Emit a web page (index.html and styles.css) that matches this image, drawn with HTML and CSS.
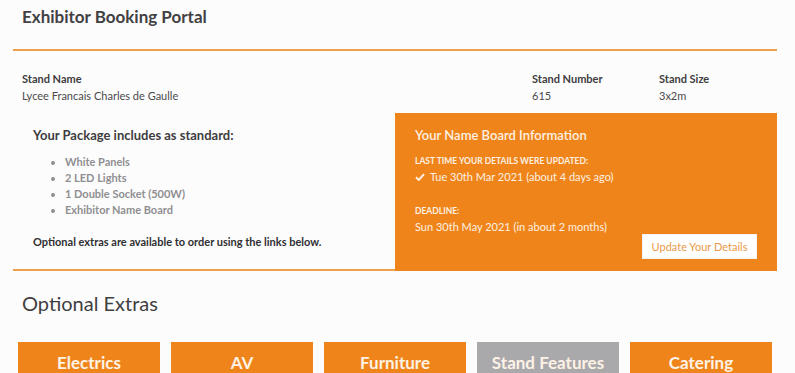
FILE: index.html
```html
<!DOCTYPE html>
<html lang="en">
<head>
  <meta charset="UTF-8">
  <meta name="viewport" content="width=device-width, initial-scale=1.0">
  <title>Exhibitor Booking Portal</title>
  <link rel="stylesheet" href="styles.css">
</head>
<body>
<div class="page">
  <header class="top">
    <h1>Exhibitor Booking Portal</h1>
  </header>

  <!-- stand details -->
  <div class="stand">
    <div class="field name">
      <div class="label">Stand Name</div>
      <div class="value">Lycee Francais Charles de Gaulle</div>
    </div>
    <div class="field number">
      <div class="label">Stand Number</div>
      <div class="value">615</div>
    </div>
    <div class="field size">
      <div class="label">Stand Size</div>
      <div class="value">3x2m</div>
    </div>
  </div>

  <div class="package">
    <div class="standard">
      <h2>Your Package includes as standard:</h2>
      <ul>
        <li>White Panels</li>
        <li>2 LED Lights</li>
        <li>1 Double Socket (500W)</li>
        <li>Exhibitor Name Board</li>
      </ul>
      <p class="note">Optional extras are available to order using the links below.</p>
    </div>

    <!-- name board -->
    <div class="board">
      <h2>Your Name Board Information</h2>
      <div class="small">LAST TIME YOUR DETAILS WERE UPDATED:</div>
      <div class="date">
        <svg class="tick" width="10" height="8" viewBox="0 0 10 8"><path d="M1 4.2 L3.8 7 L9 1.2" fill="none" stroke="#fdf0e2" stroke-width="2"/></svg>
        Tue 30th Mar 2021 (about 4 days ago)
      </div>
      <div class="small deadline">DEADLINE:</div>
      <div class="date">Sun 30th May 2021 (in about 2 months)</div>
      <div class="actions"><button class="update">Update Your Details</button></div>
    </div>
  </div>

  <h3 class="extras-title">Optional Extras</h3>
  <div class="extras">
    <a class="extra" href="">Electrics</a>
    <a class="extra" href="">AV</a>
    <a class="extra" href="">Furniture</a>
    <a class="extra off" href="">Stand Features</a>
    <a class="extra" href="">Catering</a>
  </div>
</div>
</body>
</html>
```

FILE: styles.css
```css
body {
  margin: 0;
  background: #fdfcfd;
  font-family: Lato, "Open Sans", sans-serif;
  color: #3d3d3f;
}

.page {
  width: 764px;
  margin-left: 13px;
}

.top {
  height: 49px;
  border-bottom: 2px solid #eea04a;
  padding: 0 9px;
}
.top h1 {
  margin: 0;
  padding-top: 6px;
  font-size: 17px;
  line-height: 22px;
  font-weight: 700;
  color: #414143;
}

.stand {
  display: flex;
  padding: 20px 9px 0;
  height: 42px;
}
.field .label {
  font-size: 11px;
  font-weight: 700;
  line-height: 16px;
}
.field .value {
  font-size: 11px;
  line-height: 18px;
  color: #4a4a4c;
}
.name { width: 510px; }
.number { width: 127px; }

.package {
  display: flex;
  height: 158px;
}
.standard {
  width: 362px;
  padding: 13px 0 0 20px;
  border-bottom: 2px solid #eea04a;
}
.standard h2 {
  margin: 0;
  font-size: 13px;
  line-height: 18px;
  font-weight: 700;
}
.standard ul {
  margin: 10px 0 0;
  padding-left: 32px;
  font-size: 11px;
  line-height: 16px;
  font-weight: 700;
  color: #8f8f91;
}
.standard .note {
  margin: 16px 0 0;
  font-size: 11px;
  line-height: 16px;
  font-weight: 700;
  color: #2f2f31;
}

.board {
  width: 342px;
  padding: 12px 20px 0;
  background: #ef851a;
  color: #fdf0e2;
}
.board h2 {
  margin: 0;
  font-size: 13px;
  line-height: 20px;
  font-weight: 600;
}
.board .small {
  margin-top: 10px;
  font-size: 8.5px;
  line-height: 12px;
  font-weight: 700;
}
.board .deadline { margin-top: 18px; }
.board .date {
  display: flex;
  align-items: center;
  gap: 5px;
  font-size: 11px;
  line-height: 20px;
}
.actions {
  display: flex;
  justify-content: flex-end;
  margin-top: -3px;
}
.update {
  width: 115px;
  height: 25px;
  border: 1px solid #f3f3f3;
  background: #ffffff;
  color: #e9994a;
  font-family: Lato, "Open Sans", sans-serif;
  font-size: 11px;
  padding: 0;
}

.extras-title {
  margin: 0;
  padding: 20px 9px 0;
  height: 51px;
  font-size: 20px;
  line-height: 24px;
  font-weight: 400;
  color: #3f3f41;
}

.extras {
  display: flex;
  gap: 11px;
  padding-left: 5px;
}
.extra {
  width: 142px;
  height: 40px;
  background: #ef851a;
  color: #fdf2e6;
  text-decoration: none;
  font-size: 17px;
  font-weight: 700;
  display: flex;
  justify-content: center;
  align-items: center;
}
.extra.off { background: #a9a8ab; }
```
